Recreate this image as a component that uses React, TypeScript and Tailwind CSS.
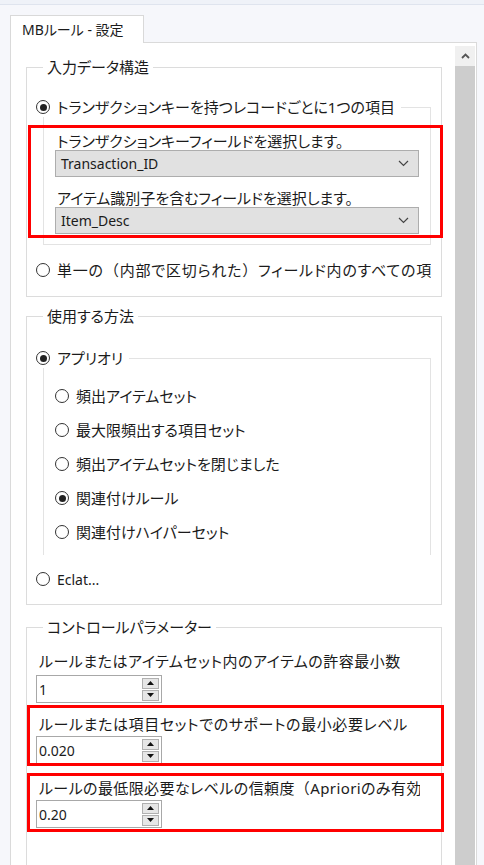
import React from 'react';

const Radio = ({ checked = false }: { checked?: boolean }) => (
  <span className="flex h-[14px] w-[14px] shrink-0 items-center justify-center rounded-full border border-[#333333] bg-white">
    {checked && <span className="h-[7px] w-[7px] rounded-full bg-[#222222]" />}
  </span>
);

const RadioRow = ({ label, checked, className = '' }: { label: React.ReactNode; checked?: boolean; className?: string }) => (
  <div className={`flex h-[20px] items-center gap-[7px] ${className}`}>
    <Radio checked={checked} />
    <span className="whitespace-nowrap">{label}</span>
  </div>
);

// full-width brackets keep their full width (no palt)
const Paren = ({ children }: { children: string }) => (
  <span className="[font-feature-settings:normal]">{children}</span>
);

const Dropdown = ({ value }: { value: string }) => (
  <div className="flex h-[27px] items-center justify-between border border-[#adadad] bg-[#e1e1e1] pl-[5px] pr-[9px]">
    <span className="text-[14px]">{value}</span>
    <svg width="11" height="7" viewBox="0 0 11 7" fill="none">
      <path d="M1 1l4.5 4.5L10 1" stroke="#444" strokeWidth="1.2" />
    </svg>
  </div>
);

const Spinner = ({ value }: { value: string }) => (
  <div className="flex h-[28px] w-[126px] items-center border border-[#a8a8a8] bg-white">
    <span className="flex-1 pl-[2px] text-[14px]">{value}</span>
    <div className="mr-[2px] flex flex-col gap-[1px]">
      <div className="flex h-[11px] w-[17px] items-center justify-center border border-[#b0b0b0] bg-[#e6e6e6]">
        <svg width="7" height="4" viewBox="0 0 7 4"><path d="M0 4L3.5 0L7 4z" fill="#111" /></svg>
      </div>
      <div className="flex h-[11px] w-[17px] items-center justify-center border border-[#b0b0b0] bg-[#e6e6e6]">
        <svg width="7" height="4" viewBox="0 0 7 4"><path d="M0 0L3.5 4L7 0z" fill="#111" /></svg>
      </div>
    </div>
  </div>
);

const RedBox = ({ className }: { className: string }) => (
  <span className={`pointer-events-none absolute border-[3px] border-[#ff0000] ${className}`} />
);

const App = () => {
  return (
    <div className="h-[865px] w-[484px] overflow-hidden bg-[#f6f7fb] font-['Noto_Sans','Noto_Sans_CJK_JP',sans-serif] text-[15px] text-[#1b1b1b] [font-feature-settings:'palt']">
      {/* window top strip */}
      <div className="h-[5px] border-b border-[#dfe4ee] bg-[#eff2f8]" />

      {/* tab */}
      <div className="pl-[10px] pt-[10px]">
        <div className="relative z-10 -mb-px flex h-[28px] w-[134px] items-center border border-b-0 border-[#d9d9d9] bg-white pl-[11px] text-[14px]">
          MBルール - 設定
        </div>
      </div>

      {/* panel */}
      <div className="ml-[10px] flex h-[900px] w-[467px] border border-[#dadada] bg-white">
        <div className="flex-1 pl-[15px] pt-[14px]">
          {/* 入力データ構造 */}
          <fieldset className="w-[416px] border border-[#dcdcdc] px-[9px] pb-[16px]">
            <legend className="ml-[7px] px-[4px] leading-[20px]">入力データ構造</legend>
            <fieldset className="mr-[1px] ml-[7px] mt-[20px] border border-[#e3e3e3] pb-[10px]">
              <legend className="-ml-[8px] pr-[6px] leading-[20px]">
                <RadioRow label="トランザクションキーを持つレコードごとに1つの項目" checked />
              </legend>
              <div className="relative px-[11px] pt-[15px]">
                <RedBox className="-left-[16px] -right-[13px] top-[8px] -bottom-[4px]" />
                <div className="pl-[2px] leading-[18px]">トランザクションキーフィールドを選択します。</div>
                <Dropdown value="Transaction_ID" />
                <div className="mt-[12px] pl-[2px] leading-[18px]">アイテム識別子を含むフィールドを選択します。</div>
                <Dropdown value="Item_Desc" />
              </div>
            </fieldset>
            <div className="mt-[15px] w-[395px] overflow-hidden whitespace-nowrap tracking-[0.8px]">
              <RadioRow
                label={
                  <>
                    単一の<Paren>（</Paren>内部で区切られた<Paren>）</Paren>フィールド内のすべての項目
                  </>
                }
              />
            </div>
          </fieldset>

          {/* 使用する方法 */}
          <fieldset className="mt-[9px] w-[416px] border border-[#dcdcdc] px-[9px] pb-[15px]">
            <legend className="ml-[7px] px-[4px] leading-[20px]">使用する方法</legend>
            <fieldset className="mr-[1px] ml-[7px] mt-[22px] border border-b-0 border-[#e3e3e3] pb-[6px]">
              <legend className="-ml-[8px] pr-[6px] leading-[20px]">
                <RadioRow label="アプリオリ" checked />
              </legend>
              <div className="flex flex-col pl-[11px] pt-[11px]">
                {[
                  ['頻出アイテムセット', false],
                  ['最大限頻出する項目セット', false],
                  ['頻出アイテムセットを閉じました', false],
                  ['関連付けルール', true],
                  ['関連付けハイパーセット', false],
                ].map(([label, checked]) => (
                  <div key={label as string} className="flex h-[34px] items-center">
                    <RadioRow label={label as string} checked={checked as boolean} />
                  </div>
                ))}
              </div>
            </fieldset>
            <RadioRow label="Eclat..." className="mt-[14px] text-[14px]" />
          </fieldset>

          {/* コントロールパラメーター */}
          <fieldset className="mt-[12px] w-[416px] border border-[#dcdcdc] px-[9px] pb-[80px]">
            <legend className="ml-[7px] px-[4px] leading-[20px]">コントロールパラメーター</legend>
            <div className="mt-[14px] pl-[3px] leading-[20px] tracking-[0.5px]">ルールまたはアイテムセット内のアイテムの許容最小数</div>
            <div className="mt-[4px]">
              <Spinner value="1" />
            </div>

            <div className="relative mt-[12px]">
              <RedBox className="-left-[9px] -right-[12px] -top-[10px] -bottom-[2px]" />
              <div className="pl-[3px] leading-[18px] whitespace-nowrap tracking-[0.6px]">ルールまたは項目セットでのサポートの最小必要レベル</div>
              <div className="mt-[3px]">
                <Spinner value="0.020" />
              </div>
            </div>

            <div className="relative mt-[15px]">
              <RedBox className="-left-[9px] -right-[12px] -top-[6px] -bottom-[4px]" />
              <div className="w-[384px] overflow-hidden pl-[3px] leading-[18px] whitespace-nowrap tracking-[0.4px]">
                ルールの最低限必要なレベルの信頼度<Paren>（</Paren>Aprioriのみ有効<Paren>）</Paren>
              </div>
              <div className="mt-[3px]">
                <Spinner value="0.20" />
              </div>
            </div>
          </fieldset>
        </div>

        {/* scrollbar */}
        <div className="mt-[3px] flex w-[20px] flex-col bg-[#f0f0f0]">
          <div className="flex h-[20px] items-center justify-center">
            <svg width="9" height="6" viewBox="0 0 9 6" fill="none">
              <path d="M1 5l3.5-3.5L8 5" stroke="#555" strokeWidth="1.8" />
            </svg>
          </div>
          <div className="flex-1 bg-[#cdcdcd]" />
        </div>
        <div className="w-[1px]" />
      </div>
    </div>
  );
};

export default App;
